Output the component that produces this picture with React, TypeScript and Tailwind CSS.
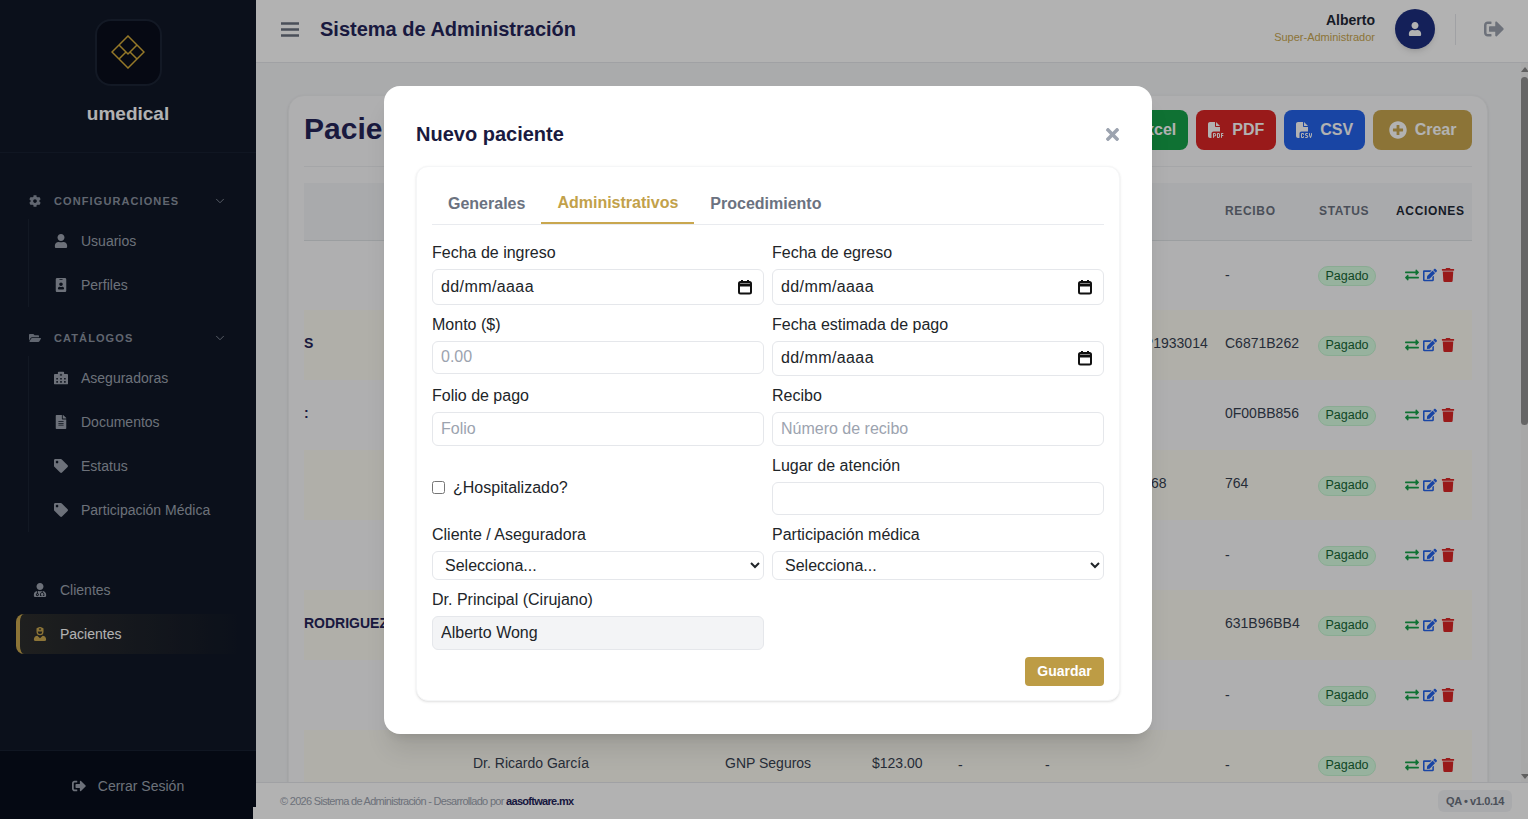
import type { ReactNode } from "react";
import {
  FaCog,
  FaEdit,
  FaExchangeAlt,
  FaFileAlt,
  FaFolderOpen,
  FaHospitalAlt,
  FaIdBadge,
  FaPlusCircle,
  FaSignOutAlt,
  FaTag,
  FaTimes,
  FaTrash,
  FaUser,
  FaUserMd,
  FaUserNurse,
} from "react-icons/fa";
import { FaFileCsv, FaFileExcel, FaFilePdf } from "react-icons/fa6";
import { ChevronDown } from "lucide-react";

const rows = [
  { name: "", recibo: "-", folio: "" },
  { name: "S", recibo: "C6871B262", folio: "2025-001-0042 P1933014", tint: true },
  { name: ":", recibo: "0F00BB856", folio: "" },
  { name: "", recibo: "764", folio: "2025-00100000068", tint: true },
  { name: "", recibo: "-", folio: "" },
  { name: "RODRIGUEZ", recibo: "631B96BB4", folio: "", tint: true },
  { name: "", recibo: "-", folio: "" },
  { name: "", recibo: "-", folio: "-", tint: true, full: true },
];

function Logo() {
  return (
    <svg width="34" height="34" viewBox="111 35 34 34" fill="none" stroke="#d4ac3a" strokeWidth="1.5">
      <path d="M128 36 144 52 128 68 112 52Z" />
      <path d="M119 45 128 54 137 45M119 59 126 52M137 59 130 52" />
    </svg>
  );
}

function SectionHeader({ icon, label }: { icon: ReactNode; label: string }) {
  return (
    <div className="flex h-9 items-center pl-[29px] pr-[29px] text-[#8b93a1]">
      <span className="flex w-3 justify-center text-[12px]">{icon}</span>
      <span className="ml-[13px] flex-1 text-[11px] font-bold tracking-[0.1em]">{label}</span>
      <ChevronDown size={14} strokeWidth={1.5} />
    </div>
  );
}

function SubItem({ icon, label }: { icon: ReactNode; label: string }) {
  return (
    <div className="flex h-11 items-center pl-[25px] text-[14px] text-[#9ca3af]">
      <span className="flex w-[14px] justify-center text-[14px]">{icon}</span>
      <span className="ml-[13px]">{label}</span>
    </div>
  );
}

function Sidebar() {
  return (
    <aside className="flex w-[256px] shrink-0 flex-col bg-[#111827]">
      <div className="flex h-[153px] flex-col items-center border-b border-[#172031] pt-[19px]">
        <div className="flex size-[67px] items-center justify-center rounded-2xl border-2 border-[#1c2435] bg-[#090d1c] pb-[2px]">
          <Logo />
        </div>
        <div className="mt-[14px] text-[19px] font-bold text-white">umedical</div>
      </div>
      <nav className="flex-1 pt-[30px]">
        <SectionHeader icon={<FaCog />} label="CONFIGURACIONES" />
        <div className="ml-[28px] border-l border-[#1a2333]">
          <SubItem icon={<FaUser />} label="Usuarios" />
          <SubItem icon={<FaIdBadge />} label="Perfiles" />
        </div>
        <div className="mt-[13px]">
          <SectionHeader icon={<FaFolderOpen />} label="CATÁLOGOS" />
        </div>
        <div className="ml-[28px] border-l border-[#1a2333]">
          <SubItem icon={<FaHospitalAlt />} label="Aseguradoras" />
          <SubItem icon={<FaFileAlt />} label="Documentos" />
          <SubItem icon={<FaTag />} label="Estatus" />
          <SubItem icon={<FaTag />} label="Participación Médica" />
        </div>
        <div className="mx-4 mt-[38px] flex flex-col gap-1 text-[14px]">
          <div className="flex h-10 items-center pl-[17px] text-[#9ca3af]">
            <span className="flex w-[14px] justify-center text-[14px]"><FaUserMd /></span>
            <span className="ml-[13px]">Clientes</span>
          </div>
          <div className="flex h-10 items-center rounded-l-lg border-l-4 border-[#c9a74f] bg-linear-to-r from-[#c9a74f]/15 to-transparent pl-[13px] text-white">
            <span className="flex w-[14px] justify-center text-[14px] text-[#c9a74f]"><FaUserNurse /></span>
            <span className="ml-[13px]">Pacientes</span>
          </div>
        </div>
      </nav>
      <div className="flex h-[69px] items-center justify-center gap-3 border-t border-[#172031] bg-[#080e1c] pt-[2px] text-[14px] text-[#9ca3af]">
        <FaSignOutAlt className="text-[14px]" />
        <span>Cerrar Sesión</span>
      </div>
    </aside>
  );
}

function Header() {
  return (
    <header className="flex h-[63px] shrink-0 items-center border-b border-[#e5e7eb] bg-white pb-1 pl-[25px] pr-6">
      <svg width="18" height="15" viewBox="0 0 18 15" stroke="#6b7280" strokeWidth="2.4">
        <path d="M0 1.5h18M0 7.5h18M0 13.5h18" />
      </svg>
      <h1 className="ml-[21px] flex-1 text-[20px] font-bold text-[#25255a]">Sistema de Administración</h1>
      <div className="pb-[2px] text-right leading-none">
        <div className="text-[14px] font-bold text-[#1f2937]">Alberto</div>
        <div className="mt-[5px] text-[11px] text-[#c9a74f]">Super-Administrador</div>
      </div>
      <div className="ml-5 flex size-10 items-center justify-center rounded-full bg-[#1e2f80] text-[14px] text-white shadow-md">
        <FaUser />
      </div>
      <div className="ml-5 h-[31px] w-px bg-[#e5e7eb]" />
      <FaSignOutAlt className="ml-7 text-[20px] text-[#9ca3af]" />
    </header>
  );
}

function ExportButton({ className, icon, label }: { className: string; icon: ReactNode; label: string }) {
  return (
    <button className={`flex h-10 items-center rounded-lg text-[16px] font-bold text-white ${className}`}>
      {icon}
      <span className="ml-2">{label}</span>
    </button>
  );
}

function PatientsCard() {
  return (
    <div className="ml-8 mr-[33px] mt-8 rounded-2xl border border-[#f0f1f3] bg-[#fbfbfc] px-[15px] pt-[14px] shadow-sm">
      <div className="flex h-[57px] items-start justify-between border-b border-[#eceef1]">
        <h2 className="-mt-px text-[30px] font-bold leading-10 text-[#25255a]">Pacientes</h2>
        <div className="flex gap-2">
          <ExportButton className="bg-[#16a34a] px-3" icon={<FaFileExcel />} label="Excel" />
          <ExportButton className="bg-[#dc2626] px-3" icon={<FaFilePdf />} label="PDF" />
          <ExportButton className="bg-[#2563eb] px-3" icon={<FaFileCsv />} label="CSV" />
          <ExportButton className="bg-[#c9a74f] px-[15.5px]" icon={<FaPlusCircle className="text-[18px]" />} label="Crear" />
        </div>
      </div>
      <table className="mt-4 w-[1168px] table-fixed text-left text-[14px] text-[#374151]">
        <colgroup>
          <col className="w-[169px]" />
          <col className="w-[252px]" />
          <col className="w-[147px]" />
          <col className="w-[86px]" />
          <col className="w-[87px]" />
          <col className="w-[180px]" />
          <col className="w-[93px]" />
          <col className="w-[78px]" />
          <col className="w-[76px]" />
        </colgroup>
        <thead>
          <tr className="h-[57px] border-b border-[#dfe2e6] bg-[#f3f4f6] text-[12px] font-bold tracking-[0.055em] text-[#6b7280]">
            <th />
            <th />
            <th />
            <th />
            <th />
            <th />
            <th>RECIBO</th>
            <th className="pl-px">STATUS</th>
            <th className="text-[#1f2937]">ACCIONES</th>
          </tr>
        </thead>
        <tbody>
          {rows.map((row, i) => (
            <tr key={i} className={`h-[70px] ${row.tint ? "bg-[#fdfbf3]" : ""}`}>
              <td className="pb-[3px] font-bold whitespace-nowrap text-[#25255a]">{row.name}</td>
              <td className="pb-[3px]">{row.full ? "Dr. Ricardo García" : ""}</td>
              <td className="pb-[3px]">{row.full ? "GNP Seguros" : ""}</td>
              <td className="pb-[3px]">{row.full ? "$123.00" : ""}</td>
              <td>{row.full ? "-" : ""}</td>
              <td className={`whitespace-nowrap ${row.full ? "" : "pb-[3px]"}`}>{row.folio}</td>
              <td className={row.recibo === "-" ? "" : "pb-[3px]"}>{row.recibo}</td>
              <td>
                <span className="inline-flex h-5 w-[58px] items-center justify-center rounded-full border border-[#c4f5d2] bg-[#d8ffe2] text-[12.5px] text-[#166534]">
                  Pagado
                </span>
              </td>
              <td>
                <div className="flex items-center gap-1 pb-px pl-[9px] text-[14px]">
                  <FaExchangeAlt className="text-[#16a34a]" />
                  <FaEdit className="text-[#2563eb]" />
                  <FaTrash className="text-[#dc2626]" />
                </div>
              </td>
            </tr>
          ))}
        </tbody>
      </table>
    </div>
  );
}

function Field({ label, children }: { label: string; children: ReactNode }) {
  return (
    <div className="mb-2">
      <label className="mb-1 block text-[16px] leading-6 text-[#212529]">{label}</label>
      {children}
    </div>
  );
}

function DateField({ label }: { label: string }) {
  return (
    <Field label={label}>
      <div className="flex h-[35.5px] items-center justify-between rounded-md border border-[#e5e7eb] bg-white pl-[8px] pr-[10px] text-[16px] text-[#212529]">
        <span className="tracking-[0.4px]">dd/mm/aaaa</span>
        <svg width="16" height="16" viewBox="0 0 16 16" fill="none" stroke="#111" strokeWidth="2">
          <rect x="2" y="3" width="12" height="11.5" rx="1.5" />
          <path d="M2 6h12" strokeWidth="3" />
          <path d="M5 1v2.5M11 1v2.5" />
        </svg>
      </div>
    </Field>
  );
}

function TextInput({ placeholder, value }: { placeholder?: string; value?: string }) {
  return (
    <input
      readOnly
      placeholder={placeholder}
      value={value ?? ""}
      className="block h-[33.5px] w-full rounded-md border border-[#e5e7eb] bg-white px-2 text-[16px] text-[#212529] placeholder:text-[#9ca3af] read-only:outline-none"
    />
  );
}

function SelectInput() {
  return (
    <select className="block h-[29px] w-full rounded-md border border-[#e5e7eb] bg-white px-2 text-[16px] text-[#212529]">
      <option>Selecciona...</option>
    </select>
  );
}

function PatientModal() {
  return (
    <div className="absolute left-[384px] top-[86px] h-[648px] w-[768px] rounded-2xl bg-white px-8 pt-8 shadow-xl">
      <div className="flex h-[48px] items-start justify-between">
        <h3 className="text-[20px] font-bold leading-8 text-[#1a1a40]">Nuevo paciente</h3>
        <FaTimes className="-mr-[2px] mt-[7px] text-[19px] text-[#9ca3af]" />
      </div>
      <div className="h-[535px] rounded-xl border border-[#f5f6f7] bg-white px-[15px] pt-[16px] shadow-sm">
        <div className="flex h-[42px] border-b border-[#e9ebef] text-[16px] font-bold">
          <button className="px-4 text-[#6b7280]">Generales</button>
          <button className="border-b-2 border-[#c9a74f] px-4 text-[#c2a14a]">Administrativos</button>
          <button className="px-4 text-[#6b7280]">Procedimiento</button>
        </div>
        <div className="mt-4 grid grid-cols-2 gap-x-2">
          <DateField label="Fecha de ingreso" />
          <DateField label="Fecha de egreso" />
          <Field label="Monto ($)">
            <TextInput placeholder="0.00" />
          </Field>
          <DateField label="Fecha estimada de pago" />
          <Field label="Folio de pago">
            <TextInput placeholder="Folio" />
          </Field>
          <Field label="Recibo">
            <TextInput placeholder="Número de recibo" />
          </Field>
          <label className="flex items-center gap-2 pb-2 pt-[7px] text-[16px] text-[#212529]">
            <input type="checkbox" className="ml-0" />
            ¿Hospitalizado?
          </label>
          <Field label="Lugar de atención">
            <TextInput />
          </Field>
          <Field label="Cliente / Aseguradora">
            <SelectInput />
          </Field>
          <Field label="Participación médica">
            <SelectInput />
          </Field>
          <Field label="Dr. Principal (Cirujano)">
            <input
              readOnly
              value="Alberto Wong"
              className="block h-[33.5px] w-full rounded-md border border-[#e5e7eb] bg-[#f3f4f6] px-2 text-[16px] text-[#212529] outline-none"
            />
          </Field>
        </div>
        <div className="-mt-[1px] flex justify-end">
          <button className="h-[29px] w-[79px] rounded bg-[#bd9c45] text-[14px] font-bold text-white">Guardar</button>
        </div>
      </div>
    </div>
  );
}

export default function App() {
  return (
    <div className="relative flex h-screen overflow-hidden bg-[#f4f5f7] font-['Liberation_Sans',Arial,sans-serif]">
      <Sidebar />
      <main className="flex min-w-0 flex-1 flex-col">
        <Header />
        <div className="flex min-h-0 flex-1">
          <div className="min-w-0 flex-1 overflow-hidden">
            <PatientsCard />
          </div>
          <div className="flex w-[7px] shrink-0 flex-col items-center bg-[#f1f1f1] pt-[4px]">
            <div className="h-0 w-0 border-x-[4px] border-b-[5px] border-x-transparent border-b-[#8a8a8a]" />
            <div className="mt-[5px] h-[348px] w-full rounded-sm bg-[#929292]" />
            <div className="mt-auto mb-[3px] h-0 w-0 border-x-[4px] border-t-[5px] border-x-transparent border-t-[#8a8a8a]" />
          </div>
        </div>
        <footer className="flex h-[37px] shrink-0 items-center justify-between border-t border-[#e5e7eb] bg-white pl-6 pr-4 text-[11px]">
          <span className="tracking-[-0.7px] text-[#9ca3af]">
            © 2026 Sistema de Administración - Desarrollado por <b className="text-[#25255a]">aasoftware.mx</b>
          </span>
          <span className="rounded-md bg-[#f3f4f6] px-2 py-[3px] font-bold tracking-[-0.4px] text-[#6b7280]">QA • v1.0.14</span>
        </footer>
      </main>
      <div className="absolute bottom-0 left-[253px] h-[12px] w-[3px] bg-white" />
      <div className="absolute inset-0 bg-black/30" />
      <PatientModal />
    </div>
  );
}
